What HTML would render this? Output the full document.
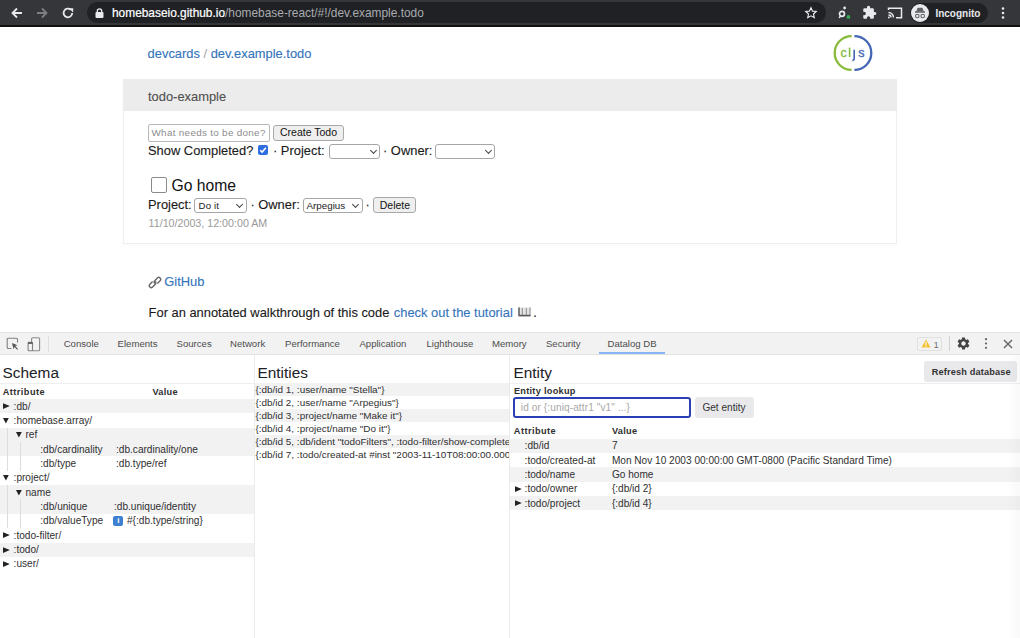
<!DOCTYPE html>
<html><head><meta charset="utf-8">
<style>
*{box-sizing:border-box;margin:0;padding:0}
html,body{width:1020px;height:638px;overflow:hidden;background:#fff;font-family:"Liberation Sans",sans-serif;}
.a{position:absolute;white-space:nowrap}
#tb{position:absolute;left:0;top:0;width:1020px;height:25px;background:#35363a}
#tbl{position:absolute;left:0;top:25px;width:1020px;height:2px;background:#111}
#pill{position:absolute;left:86.6px;top:1.8px;width:739px;height:21.2px;border-radius:10.6px;background:#202124}
.url{font-size:11.9px;color:#fff;top:6px;line-height:14px;-webkit-text-stroke:0.2px currentColor}
.pg{font-size:12.9px;color:#1a1a1a;line-height:15px;-webkit-text-stroke:0.12px currentColor}
.lnk{color:#3474bb}
.dt{font-size:9.6px;color:#4d4d4d;line-height:12px}
.db{font-size:10.1px;color:#303030;line-height:12px}
.sel{position:absolute;border:1px solid #a6a6a6;border-radius:3px;background:#fff}
.btn{position:absolute;border:1px solid #a9a9a9;border-radius:3px;background:#efefef;font-size:10.5px;color:#111;text-align:center}
.chev{position:absolute;width:5px;height:5px;border-right:1.7px solid #444;border-bottom:1.7px solid #444;transform:rotate(45deg)}
.row{position:absolute;height:14.35px}
.g{background:#f2f2f3}
</style></head><body>
<!-- toolbar -->
<div id="tb"></div><div id="tbl"></div>
<div id="pill"></div>
<!-- back -->
<svg class="a" style="left:9px;top:6px" width="16" height="14" viewBox="0 0 16 14"><path d="M13 7H4M8 2.5L3.5 7 8 11.5" stroke="#e8eaed" stroke-width="1.8" fill="none"/></svg>
<svg class="a" style="left:34px;top:6px" width="16" height="14" viewBox="0 0 16 14"><path d="M3 7h9M8 2.5L12.5 7 8 11.5" stroke="#7d7f83" stroke-width="1.8" fill="none"/></svg>
<svg class="a" style="left:60px;top:5px" width="16" height="16" viewBox="0 0 16 16"><path d="M12.2 8a4.3 4.3 0 1 1-1.3-3.1" stroke="#e8eaed" stroke-width="1.8" fill="none"/><path d="M9 3.2h4.2V7.4z" fill="#e8eaed"/></svg>
<!-- lock -->
<svg class="a" style="left:95px;top:8px" width="9" height="10" viewBox="0 0 9 10"><rect x="0.5" y="4" width="8" height="6" rx="1" fill="#e8eaed"/><path d="M2.3 4.5V3a2.2 2.2 0 0 1 4.4 0v1.5" stroke="#e8eaed" stroke-width="1.3" fill="none"/></svg>
<div class="a url" style="left:112px">homebaseio.github.io<span style="color:#a8abb0;-webkit-text-stroke:0">/homebase-react/#!/dev.example.todo</span></div>
<!-- star -->
<svg class="a" style="left:804px;top:6px" width="14" height="14" viewBox="0 0 24 24"><path d="M12 3l2.7 5.8 6.3.7-4.7 4.3 1.3 6.2L12 16.9 6.4 20l1.3-6.2L3 9.5l6.3-.7z" stroke="#e8eaed" stroke-width="2" fill="none"/></svg>
<!-- ext icon -->
<svg class="a" style="left:835px;top:4px" width="16" height="17" viewBox="0 0 16 17"><circle cx="7" cy="9.8" r="2.5" stroke="#e8eaed" stroke-width="1.7" fill="none"/><circle cx="9.6" cy="4" r="1.4" fill="#e8eaed"/><path d="M5.4 11.8L4.2 14" stroke="#e8eaed" stroke-width="1.5"/><circle cx="13.4" cy="12.9" r="1.9" fill="#34a853"/></svg>
<!-- puzzle -->
<svg class="a" style="left:862px;top:5px" width="15" height="15" viewBox="0 0 24 24"><path d="M20.5 11H19V7a2 2 0 0 0-2-2h-4V3.5a2.5 2.5 0 0 0-5 0V5H4a2 2 0 0 0-2 2v3.8h1.5a2.7 2.7 0 0 1 0 5.4H2V20a2 2 0 0 0 2 2h3.8v-1.5a2.7 2.7 0 0 1 5.4 0V22H17a2 2 0 0 0 2-2v-4h1.5a2.5 2.5 0 0 0 0-5z" fill="#e8eaed"/></svg>
<!-- cast -->
<svg class="a" style="left:887px;top:6px" width="16" height="14" viewBox="0 0 16 14"><path d="M1.5 4V2.2h13v9.6H9" stroke="#e8eaed" stroke-width="1.5" fill="none"/><path d="M1.5 6.5a5 5 0 0 1 5 5M1.5 9a2.5 2.5 0 0 1 2.5 2.5" stroke="#e8eaed" stroke-width="1.4" fill="none"/><circle cx="1.8" cy="11.5" r="0.9" fill="#e8eaed"/></svg>
<!-- incognito pill -->
<div class="a" style="left:910px;top:3px;width:78px;height:20px;border-radius:10px;background:#202124"></div>
<div class="a" style="left:911px;top:4px;width:18px;height:18px;border-radius:50%;background:#e8eaed"></div>
<svg class="a" style="left:913px;top:7px" width="14" height="12" viewBox="0 0 14 12"><path d="M2 5h10M4 4.5l1-3h4l1 3" stroke="#5f6368" stroke-width="1.3" fill="#5f6368"/><circle cx="4.3" cy="9" r="1.8" stroke="#5f6368" stroke-width="1.1" fill="none"/><circle cx="9.7" cy="9" r="1.8" stroke="#5f6368" stroke-width="1.1" fill="none"/></svg>
<div class="a" style="left:935.4px;top:6.5px;font-size:10px;color:#e8eaed;line-height:14px;font-weight:bold">Incognito</div>
<!-- menu -->
<svg class="a" style="left:1000px;top:6px" width="6" height="14" viewBox="0 0 6 14"><circle cx="3" cy="2.5" r="1.3" fill="#e8eaed"/><circle cx="3" cy="7" r="1.3" fill="#e8eaed"/><circle cx="3" cy="11.5" r="1.3" fill="#e8eaed"/></svg>

<!-- page -->
<div class="a pg lnk" style="left:147.6px;top:46px">devcards <span style="color:#aaa">/</span> dev.example.todo</div>
<!-- cljs logo -->
<svg class="a" style="left:832px;top:33px" width="42" height="40" viewBox="0 0 42 40">
<path d="M19.6 3.1A16.9 16.9 0 0 0 19.6 36.9" stroke="#88bb3c" stroke-width="2.3" fill="none"/>
<path d="M22.4 3.1A16.9 16.9 0 0 1 22.4 36.9" stroke="#4467b3" stroke-width="2.3" fill="none"/>
<text x="8.6" y="24" font-family="Liberation Sans" font-size="12.5" fill="#88bb3c" stroke="#88bb3c" stroke-width="0.35">c</text>
<rect x="16.8" y="14.6" width="1.6" height="9.4" fill="#88bb3c"/>
<path d="M22.2 16.7v8.5q0 2.2-1.8 2.2" stroke="#4467b3" stroke-width="1.6" fill="none"/>
<text x="26.2" y="24" font-family="Liberation Sans" font-size="12.5" fill="#4467b3" stroke="#4467b3" stroke-width="0.35">s</text>
</svg>

<!-- card -->
<div class="a" style="left:123px;top:79px;width:774px;height:165px;border:1px solid #efefef;border-top:none;box-shadow:0 1px 2px rgba(0,0,0,0.03)"></div>
<div class="a" style="left:123px;top:79px;width:774px;height:32px;background:#ececec"></div>
<div class="a pg" style="left:148px;top:89px;color:#505050">todo-example</div>

<div class="a" style="left:148px;top:124px;width:122px;height:17.5px;border:1px solid #b8b8b8;border-radius:2px"></div>
<div class="a" style="left:151.5px;top:127.3px;font-size:9.9px;color:#8c8c8c;line-height:12px;letter-spacing:0.3px">What needs to be done?</div>
<div class="btn" style="left:273.4px;top:125px;width:70.2px;height:15.6px;line-height:13.2px">Create Todo</div>
<div class="a pg" style="left:148px;top:142.6px">Show Completed?</div>
<div class="a" style="left:258px;top:145.2px;width:9.6px;height:9.6px;border-radius:2px;background:#2f6de1"></div>
<svg class="a" style="left:257.8px;top:145.2px" width="10" height="10" viewBox="0 0 10 10"><path d="M2.2 5.2l1.9 1.9 3.8-4.3" stroke="#fff" stroke-width="1.5" fill="none"/></svg>
<div class="a pg" style="left:273px;top:142.6px">· Project:</div>
<div class="sel" style="left:328.7px;top:144.4px;width:51.5px;height:14.2px"></div>
<div class="chev" style="left:371.3px;top:147.6px"></div>
<div class="a pg" style="left:383px;top:142.6px">· Owner:</div>
<div class="sel" style="left:435.3px;top:144.4px;width:59.5px;height:14.2px"></div>
<div class="chev" style="left:486.3px;top:147.6px"></div>

<div class="a" style="left:151.3px;top:177.2px;width:15.8px;height:15.6px;border:1px solid #8a8a8a;border-radius:2px"></div>
<div class="a" style="left:171.5px;top:176.5px;font-size:15.7px;color:#111;line-height:18px">Go home</div>
<div class="a pg" style="left:148px;top:196.7px">Project:</div>
<div class="sel" style="left:194px;top:198.3px;width:52.7px;height:14.5px"></div>
<div class="a" style="left:198.5px;top:199.7px;font-size:9.6px;letter-spacing:0.2px;color:#222;line-height:11px">Do it</div>
<div class="chev" style="left:237.3px;top:201.6px"></div>
<div class="a pg" style="left:250.4px;top:196.7px">· Owner:</div>
<div class="sel" style="left:303px;top:198.3px;width:59.5px;height:14.7px"></div>
<div class="a" style="left:306.5px;top:199.7px;font-size:9.8px;color:#222;line-height:11px">Arpegius</div>
<div class="chev" style="left:352.8px;top:201.6px"></div>
<div class="a pg" style="left:365.5px;top:196.7px">·</div>
<div class="btn" style="left:373.3px;top:197px;width:43.2px;height:16px;line-height:14px">Delete</div>
<div class="a" style="left:148.6px;top:217px;font-size:10.7px;color:#999;line-height:13px">11/10/2003, 12:00:00 AM</div>

<!-- github -->
<svg class="a" style="left:148px;top:275.5px" width="14" height="13" viewBox="0 0 14 13"><path d="M4.6 5.6L1.9 8.3a1.9 1.9 0 0 0 2.7 2.7l2.7-2.7a1.9 1.9 0 0 0 0-2.7M9.4 7.4l2.7-2.7a1.9 1.9 0 0 0-2.7-2.7L6.7 4.7a1.9 1.9 0 0 0 0 2.7" stroke="#666" stroke-width="1.4" fill="none"/></svg>
<div class="a pg lnk" style="left:164.3px;top:273.7px">GitHub</div>
<div class="a pg" style="left:148.6px;top:304.5px">For an annotated walkthrough of this code</div>
<div class="a pg lnk" style="left:393.8px;top:304.5px">check out the tutorial</div>
<svg class="a" style="left:517.5px;top:307px" width="13" height="10" viewBox="0 0 13 10"><rect x="0.5" y="0.5" width="12" height="8" fill="#e4e4e4"/><path d="M1 0.5v8.3M4.3 1v7M8.3 1v7M12 0.5v8" stroke="#8a8a8a" stroke-width="1"/><path d="M0.5 8.6H12.5" stroke="#555" stroke-width="1.6"/><path d="M1 0.5v8" stroke="#666" stroke-width="1.4"/></svg>
<div class="a pg" style="left:533.2px;top:304.5px">.</div>

<!-- devtools -->
<div class="a" style="left:0;top:332px;width:1020px;height:306px;background:#fff"></div>
<div class="a" style="left:0;top:332px;width:1020px;height:23.3px;background:#f2f2f2;border-top:1.3px solid #e2e2e2;border-bottom:1.3px solid #e2e2e2"></div>

<!-- tab icons -->
<svg class="a" style="left:5.5px;top:337px" width="14" height="14" viewBox="0 0 14 14"><path d="M5.5 11.5H2.2a1 1 0 0 1-1-1V2.2a1 1 0 0 1 1-1h8.3a1 1 0 0 1 1 1V5.5" stroke="#808080" stroke-width="1.1" fill="none"/><path d="M6 6l5.5 2.2-2.3 0.9L12 12l-0.8 0.8-2.8-2.9-0.9 2.3z" fill="#555"/></svg>
<svg class="a" style="left:26.5px;top:336.5px" width="14" height="15" viewBox="0 0 14 15"><rect x="4.6" y="0.8" width="8" height="13" rx="1" stroke="#8a8a8a" stroke-width="1.1" fill="none"/><rect x="1.1" y="5.3" width="4.4" height="8.5" rx="0.8" stroke="#808080" stroke-width="1.1" fill="#f2f2f2"/><rect x="1.1" y="5.3" width="4.4" height="1.6" fill="#555"/></svg>
<div class="a" style="left:48px;top:336px;width:1px;height:16px;background:#e0e0e0"></div>
<div class="a dt" style="left:63.7px;top:338px">Console</div>
<div class="a dt" style="left:117.6px;top:338px">Elements</div>
<div class="a dt" style="left:176.5px;top:338px">Sources</div>
<div class="a dt" style="left:230px;top:338px">Network</div>
<div class="a dt" style="left:285px;top:338px">Performance</div>
<div class="a dt" style="left:359.4px;top:338px">Application</div>
<div class="a dt" style="left:426.5px;top:338px">Lighthouse</div>
<div class="a dt" style="left:492px;top:338px">Memory</div>
<div class="a dt" style="left:545.9px;top:338px">Security</div>
<div class="a dt" style="left:607.6px;top:338px">Datalog DB</div>
<div class="a" style="left:599.4px;top:352px;width:66px;height:2px;background:#8ab4f8"></div>
<!-- right icons -->
<div class="a" style="left:917px;top:336.5px;width:25.4px;height:14.5px;border:1px solid #e0e0e0;border-radius:2px"></div>
<svg class="a" style="left:921px;top:339px" width="10" height="9" viewBox="0 0 10 9"><path d="M5 0.5L9.5 8.5H0.5z" fill="#f5c030"/><rect x="4.4" y="3" width="1.2" height="3" fill="#fff"/><rect x="4.4" y="6.6" width="1.2" height="1.1" fill="#fff"/></svg>
<div class="a" style="left:933.5px;top:338.5px;font-size:9.6px;color:#777;line-height:11px">1</div>
<div class="a" style="left:949px;top:336px;width:1px;height:15px;background:#d0d0d0"></div>
<svg class="a" style="left:955.8px;top:336px" width="15" height="15" viewBox="0 0 24 24"><path d="M19.14 12.94c.04-.3.06-.61.06-.94 0-.32-.02-.64-.07-.94l2.03-1.58c.18-.14.23-.41.12-.61l-1.92-3.32c-.12-.22-.37-.29-.59-.22l-2.39.96c-.5-.38-1.030-.7-1.62-.94l-.36-2.54c-.04-.24-.24-.41-.48-.41h-3.84c-.24 0-.43.17-.47.41l-.36 2.54c-.59.24-1.13.57-1.62.94l-2.39-.96c-.22-.08-.47 0-.59.22L2.74 8.87c-.12.21-.08.47.12.61l2.03 1.58c-.05.3-.09.63-.09.94s.02.64.07.94l-2.03 1.58c-.18.14-.23.41-.12.61l1.92 3.32c.12.22.37.29.59.22l2.39-.96c.5.38 1.03.7 1.62.94l.36 2.54c.05.24.24.41.48.41h3.840c.24 0 .44-.17.47-.41l.36-2.54c.59-.24 1.13-.56 1.62-.94l2.39.96c.22.08.47 0 .59-.22l1.92-3.32c.12-.22.07-.47-.12-.61l-2.01-1.58zM12 15.6c-1.98 0-3.6-1.62-3.6-3.6s1.62-3.6 3.6-3.6 3.6 1.62 3.6 3.6-1.62 3.6-3.6 3.6z" fill="#444"/></svg>
<svg class="a" style="left:983px;top:337px" width="6" height="13" viewBox="0 0 6 13"><circle cx="3" cy="2.2" r="1.1" fill="#5f6368"/><circle cx="3" cy="6.5" r="1.1" fill="#5f6368"/><circle cx="3" cy="10.8" r="1.1" fill="#5f6368"/></svg>
<svg class="a" style="left:1003px;top:339px" width="10" height="10" viewBox="0 0 10 10"><path d="M1 1l8 8M9 1L1 9" stroke="#5f6368" stroke-width="1.4"/></svg>

<!-- panel separators -->
<div class="a" style="left:254px;top:355px;width:1px;height:283px;background:#ebebeb"></div>
<div class="a" style="left:509px;top:355px;width:1px;height:283px;background:#ebebeb"></div>
<div class="a" style="left:0;top:383px;width:1020px;height:1px;background:#eeeeee"></div>

<!-- Schema -->
<div class="a" style="left:2.5px;top:364px;font-size:15.4px;color:#202124;line-height:17px">Schema</div>
<div class="a db" style="left:2.7px;top:386px;font-weight:bold;font-size:9.2px;letter-spacing:0.45px">Attribute</div>
<div class="a db" style="left:152.4px;top:386px;font-weight:bold;font-size:9.2px;letter-spacing:0.3px">Value</div>
<div class="a g" style="left:0;top:399.00px;width:254px;height:14.35px"></div>
<div class="a g" style="left:0;top:427.70px;width:254px;height:14.35px"></div>
<div class="a g" style="left:0;top:442.05px;width:254px;height:14.35px"></div>
<div class="a g" style="left:0;top:485.10px;width:254px;height:14.35px"></div>
<div class="a g" style="left:0;top:499.45px;width:254px;height:14.35px"></div>
<div class="a g" style="left:0;top:542.50px;width:254px;height:14.35px"></div>
<svg class="a" style="left:3.10px;top:403.10px" width="8" height="7" viewBox="0 0 8 7"><path d="M0 0.2L6.8 3.1 0 6z" fill="#222"/></svg>
<div class="a db" style="left:13.6px;top:400.60px">:db/</div>
<svg class="a" style="left:3.40px;top:417.85px" width="7" height="7" viewBox="0 0 7 7"><path d="M0 0H5.8L2.9 5.4z" fill="#222"/></svg>
<div class="a db" style="left:13.6px;top:414.95px">:homebase.array/</div>
<svg class="a" style="left:16.40px;top:432.20px" width="7" height="7" viewBox="0 0 7 7"><path d="M0 0H5.8L2.9 5.4z" fill="#222"/></svg>
<div class="a db" style="left:25.5px;top:429.30px">ref</div>
<div class="a db" style="left:40.3px;top:443.65px">:db/cardinality</div>
<div class="a db" style="left:116.0px;top:443.65px">:db.cardinality/one</div>
<div class="a db" style="left:40.3px;top:458.00px">:db/type</div>
<div class="a db" style="left:116.0px;top:458.00px">:db.type/ref</div>
<svg class="a" style="left:3.40px;top:475.25px" width="7" height="7" viewBox="0 0 7 7"><path d="M0 0H5.8L2.9 5.4z" fill="#222"/></svg>
<div class="a db" style="left:13.6px;top:472.35px">:project/</div>
<svg class="a" style="left:16.40px;top:489.60px" width="7" height="7" viewBox="0 0 7 7"><path d="M0 0H5.8L2.9 5.4z" fill="#222"/></svg>
<div class="a db" style="left:25.5px;top:486.70px">name</div>
<div class="a db" style="left:40.3px;top:501.05px">:db/unique</div>
<div class="a db" style="left:114.0px;top:501.05px">:db.unique/identity</div>
<div class="a db" style="left:40.3px;top:515.40px">:db/valueType</div>
<div class="a db" style="left:127.0px;top:515.40px">#{:db.type/string}</div>
<svg class="a" style="left:3.10px;top:532.25px" width="8" height="7" viewBox="0 0 8 7"><path d="M0 0.2L6.8 3.1 0 6z" fill="#222"/></svg>
<div class="a db" style="left:13.6px;top:529.75px">:todo-filter/</div>
<svg class="a" style="left:3.10px;top:546.60px" width="8" height="7" viewBox="0 0 8 7"><path d="M0 0.2L6.8 3.1 0 6z" fill="#222"/></svg>
<div class="a db" style="left:13.6px;top:544.10px">:todo/</div>
<svg class="a" style="left:3.10px;top:560.95px" width="8" height="7" viewBox="0 0 8 7"><path d="M0 0.2L6.8 3.1 0 6z" fill="#222"/></svg>
<div class="a db" style="left:13.6px;top:558.45px">:user/</div>
<div class="a" style="left:7px;top:427.70px;width:1px;height:43.05px;background:#dddddd"></div>
<div class="a" style="left:20.3px;top:442.05px;width:1px;height:28.70px;background:#dddddd"></div>
<div class="a" style="left:7px;top:485.10px;width:1px;height:43.05px;background:#dddddd"></div>
<div class="a" style="left:20.3px;top:499.45px;width:1px;height:28.70px;background:#dddddd"></div>
<div class="a" style="left:113.4px;top:516.20px;width:10px;height:10px;border-radius:2px;background:#3d7fd0"></div>
<div class="a" style="left:117.3px;top:516.40px;font-size:8px;color:#fff;line-height:9px;font-weight:bold">i</div>
<!-- Entities -->
<div class="a" style="left:257.5px;top:364px;font-size:15.4px;color:#202124;line-height:17px">Entities</div>
<div class="a" style="left:255px;top:383.2px;width:254px;height:254px;overflow:hidden">
<div class="a db" style="left:0;top:0.00px;width:254px;height:12.95px;background:#f2f2f3;padding-left:0.5px;line-height:13.9px;font-size:9.93px">{:db/id 1, :user/name &quot;Stella&quot;}</div>
<div class="a db" style="left:0;top:12.95px;width:254px;height:12.95px;padding-left:0.5px;line-height:13.9px;font-size:9.93px">{:db/id 2, :user/name &quot;Arpegius&quot;}</div>
<div class="a db" style="left:0;top:25.90px;width:254px;height:12.95px;background:#f2f2f3;padding-left:0.5px;line-height:13.9px;font-size:9.93px">{:db/id 3, :project/name &quot;Make it&quot;}</div>
<div class="a db" style="left:0;top:38.85px;width:254px;height:12.95px;padding-left:0.5px;line-height:13.9px;font-size:9.93px">{:db/id 4, :project/name &quot;Do it&quot;}</div>
<div class="a db" style="left:0;top:51.80px;width:254px;height:12.95px;background:#f2f2f3;padding-left:0.5px;line-height:13.9px;font-size:9.93px">{:db/id 5, :db/ident &quot;todoFilters&quot;, :todo-filter/show-completed? true}</div>
<div class="a db" style="left:0;top:64.75px;width:254px;height:12.95px;padding-left:0.5px;line-height:13.9px;font-size:9.93px">{:db/id 7, :todo/created-at #inst &quot;2003-11-10T08:00:00.000-00:00&quot;}</div>
</div>
<!-- Entity -->
<div class="a" style="left:513.5px;top:364px;font-size:15.4px;color:#202124;line-height:17px">Entity</div>
<div class="a" style="left:924px;top:361px;width:93px;height:20.5px;border-radius:3px;background:#e9e9ec"></div>
<div class="a db" style="left:931.8px;top:366px;font-weight:bold;color:#333;font-size:9.2px;letter-spacing:0.14px">Refresh database</div>
<div class="a db" style="left:513.9px;top:385px;font-weight:bold;font-size:9.2px;letter-spacing:0.28px">Entity lookup</div>
<div class="a" style="left:513.2px;top:397.3px;width:178.3px;height:20.3px;border:2px solid #2b40b4;border-radius:3px"></div>
<div class="a db" style="left:520.8px;top:401.5px;color:#a8a8a8;letter-spacing:0.1px">id or {:uniq-attr1 "v1" ...}</div>
<div class="a" style="left:695px;top:397.4px;width:58.6px;height:20.3px;border-radius:3px;background:#e9e9ec"></div>
<div class="a db" style="left:702.4px;top:402px;color:#333">Get entity</div>
<div class="a db" style="left:513.8px;top:425.3px;font-weight:bold;font-size:9.2px;letter-spacing:0.45px">Attribute</div>
<div class="a db" style="left:611.9px;top:425.3px;font-weight:bold;font-size:9.2px;letter-spacing:0.3px">Value</div>
<div class="a g" style="left:510px;top:438.70px;width:510px;height:14.35px"></div>
<div class="a g" style="left:510px;top:467.40px;width:510px;height:14.35px"></div>
<div class="a g" style="left:510px;top:496.10px;width:510px;height:14.35px"></div>
<div class="a db" style="left:524.6px;top:440.30px">:db/id</div>
<div class="a db" style="left:611.9px;top:440.30px">7</div>
<div class="a db" style="left:524.6px;top:454.65px">:todo/created-at</div>
<div class="a db" style="left:611.9px;top:454.65px">Mon Nov 10 2003 00:00:00 GMT-0800 (Pacific Standard Time)</div>
<div class="a db" style="left:524.6px;top:469.00px">:todo/name</div>
<div class="a db" style="left:611.9px;top:469.00px">Go home</div>
<svg class="a" style="left:514.80px;top:485.85px" width="8" height="7" viewBox="0 0 8 7"><path d="M0 0.2L6.8 3.1 0 6z" fill="#222"/></svg>
<div class="a db" style="left:524.6px;top:483.35px">:todo/owner</div>
<div class="a db" style="left:611.9px;top:483.35px">{:db/id 2}</div>
<svg class="a" style="left:514.80px;top:500.20px" width="8" height="7" viewBox="0 0 8 7"><path d="M0 0.2L6.8 3.1 0 6z" fill="#222"/></svg>
<div class="a db" style="left:524.6px;top:497.70px">:todo/project</div>
<div class="a db" style="left:611.9px;top:497.70px">{:db/id 4}</div>
<div class="a" style="left:1006px;top:355px;width:14px;height:283px;background:linear-gradient(to right,rgba(0,0,0,0),rgba(0,0,0,0.025))"></div>
</body></html>
